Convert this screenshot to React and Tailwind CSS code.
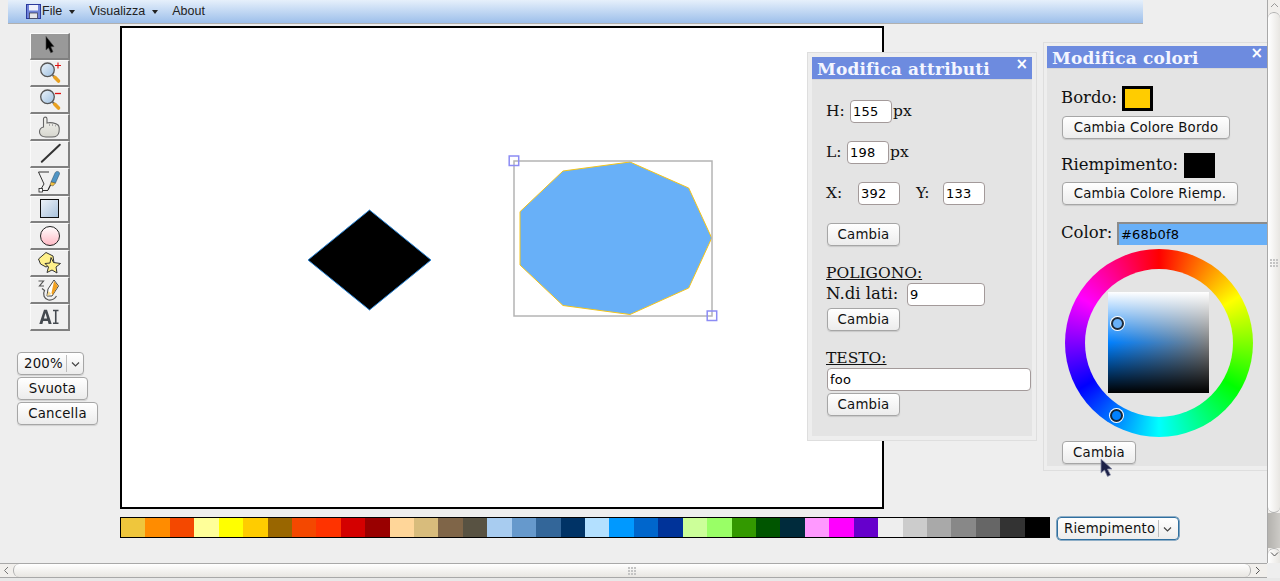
import React from 'react';

const serif = "font-['DejaVu_Serif',serif]";
const sans = "font-['DejaVu_Sans',sans-serif]";

const swatches = [
  '#efc63c', '#ff8c00', '#f44800', '#ffff99', '#ffff00', '#ffcc00', '#996600', '#f44800', '#ff3300', '#d40000',
  '#990000', '#ffd699', '#d8bc7c', '#7f6548', '#585242', '#a8ccf0', '#6699cc', '#336699', '#003366', '#b3e0ff',
  '#0099ff', '#0066cc', '#003399', '#ccff99', '#99ff66', '#339900', '#005500', '#002b3c', '#ff99ff', '#ff00ff',
  '#6600cc', '#eeeeee', '#cccccc', '#a9a9a9', '#888888', '#666666', '#333333', '#000000',
];

const Lens = ({ sign }) => (
  <svg width="24" height="24" viewBox="0 0 24 24">
    <defs>
      <linearGradient id={`lens${sign}`} x1="0" y1="0" x2="1" y2="1">
        <stop offset="0" stopColor="#eef5fb" />
        <stop offset="1" stopColor="#9dbfe0" />
      </linearGradient>
    </defs>
    <circle cx="9.5" cy="8.8" r="6.8" fill={`url(#lens${sign})`} stroke="#555" strokeWidth="1.3" />
    <path d="M14.5 14 L16.5 16" stroke="#666" strokeWidth="2" />
    <path d="M16.8 16.3 L20.5 20" stroke="#e8a020" strokeWidth="3.6" strokeLinecap="round" />
    {sign === 'plus' ? (
      <path d="M17 4.5 H23 M20 1.5 V7.5" stroke="#e01010" strokeWidth="1.1" />
    ) : (
      <path d="M17 5.5 H23" stroke="#e01010" strokeWidth="1.3" />
    )}
  </svg>
);

const toolIcons = [
  <svg key="a" width="24" height="24" viewBox="0 0 24 24">
    <path d="M8 2.5 V16 L10.5 13.8 L12.8 18.8 L15 17.8 L12.8 12.8 L16 12.5 Z" fill="#000" stroke="#444" strokeWidth="0.6" />
  </svg>,
  <Lens key="b" sign="plus" />,
  <Lens key="c" sign="minus" />,
  <svg key="d" width="24" height="24" viewBox="0 0 24 24">
    <defs>
      <linearGradient id="handFill" x1="0" y1="0" x2="0" y2="1">
        <stop offset="0" stopColor="#f6f6f2" />
        <stop offset="1" stopColor="#d6d6ce" />
      </linearGradient>
    </defs>
    <path d="M5.5 12 V4 C5.5 1.5 9 1.5 9 4 V8 C12 7 18 8 20 10 C21.5 11.5 21.5 14 21 17 C20.5 20.5 18 22 14 22 H8 C4 22 1.5 20 1.5 17 C1.5 14 3.5 12.5 5.5 12 Z" fill="url(#handFill)" stroke="#666" strokeWidth="1.1" />
    <path d="M11.5 8.5 V11 M14.5 8.5 V11 M17.5 9.5 V11.5" stroke="#aaa" strokeWidth="1" />
  </svg>,
  <svg key="e" width="24" height="24" viewBox="0 0 24 24">
    <path d="M3.8 19.8 L21.8 2.8" stroke="#333" strokeWidth="2" strokeLinecap="round" />
  </svg>,
  <svg key="f" width="24" height="24" viewBox="0 0 24 24">
    <path d="M0.5 2 H11 M0.5 2 L6 14 L3 19 M4.5 20.5 H10" fill="none" stroke="#333" strokeWidth="1" />
    <rect x="1" y="18.5" width="3.5" height="3.5" fill="#fff" stroke="#222" strokeWidth="0.8" />
    <path d="M13 12 L17 3 C18 0.5 22 1 21.5 4 L17.5 13 Z" fill="#4f94c4" stroke="#2a4a60" strokeWidth="0.5" />
    <path d="M13 12 L17.5 13 L15 16 L12 15 Z" fill="#f0c040" stroke="#333" strokeWidth="0.4" />
    <path d="M12.5 15 L10 20" stroke="#222" strokeWidth="1.1" />
  </svg>,
  <svg key="g" width="24" height="24" viewBox="0 0 24 24">
    <defs>
      <linearGradient id="rectFill" x1="0" y1="0" x2="1" y2="1">
        <stop offset="0" stopColor="#eef3f9" />
        <stop offset="1" stopColor="#a8c2dc" />
      </linearGradient>
    </defs>
    <rect x="2.5" y="2.5" width="18" height="18" fill="url(#rectFill)" stroke="#111" strokeWidth="1" />
  </svg>,
  <svg key="h" width="24" height="24" viewBox="0 0 24 24">
    <defs>
      <linearGradient id="circFill" x1="0" y1="0" x2="0" y2="1">
        <stop offset="0" stopColor="#fff" />
        <stop offset="1" stopColor="#ffb8c4" />
      </linearGradient>
    </defs>
    <circle cx="12" cy="12" r="9.5" fill="url(#circFill)" stroke="#222" strokeWidth="1" />
  </svg>,
  <svg key="i" width="24" height="24" viewBox="0 0 24 24">
    <path d="M0.5 8 L8 1.5 L15 5 L16 12 L8 16 L2.5 13 Z" fill="#fff08a" stroke="#333" strokeWidth="1" />
    <path d="M13 6.5 L15.5 11.5 L22.5 12.5 L18 16 L19 22 L14 19 L9 21.5 L10.5 16 L7 12.5 L12 12 Z" fill="#fff08a" stroke="#333" strokeWidth="1" />
  </svg>,
  <svg key="j" width="24" height="24" viewBox="0 0 24 24">
    <path d="M0.5 3 H5.5 L1.5 8 H6 M4 10.5 L6.5 12.5 C4.5 16 6 21 10.5 22 C13.5 22.5 16.5 21 18.5 18" fill="none" stroke="#555" strokeWidth="1.2" />
    <path d="M9 18 L10 11 L16 2 L20.5 8 L14 18 Z" fill="#fff" stroke="#333" strokeWidth="0.9" />
    <path d="M16 3 L20 8 L14.5 17 L13.5 15 Z" fill="#f0a020" />
    <path d="M9 18 L10.5 13 L13.5 16 Z" fill="#f8dc90" />
  </svg>,
  <svg key="k" width="24" height="24" viewBox="0 0 24 24">
    <path d="M1.3 19 L6 4.7 H9 L13.7 19 H10.6 L9.8 16 H5.2 L4.4 19 Z M5.9 13.5 H9.1 L7.5 8 Z" fill="#454a50" fillRule="evenodd" />
    <path d="M15 5.5 H20.5 M17.75 5.5 V18.2 M15 18.2 H20.5" stroke="#454a50" strokeWidth="1.6" fill="none" />
  </svg>,
];

const Btn = ({ children, className = '' }) => (
  <button className={`${sans} h-[23px] rounded-[4px] border border-[#a6a6a6] bg-gradient-to-b from-white to-[#ececec] text-[13.3px] leading-none tracking-[0.2px] text-[#111] shadow-[0_1px_1px_rgba(0,0,0,0.12)] ${className}`}>
    {children}
  </button>
);

const Caret = () => (
  <svg width="9" height="6" viewBox="0 0 9 6" className="ml-1">
    <path d="M1 1.5 L4.5 5 L8 1.5" fill="none" stroke="#444" strokeWidth="1.2" />
  </svg>
);

const SelectBox = ({ label, className = '' }) => (
  <div className={`${sans} flex h-[23px] items-center rounded-[4px] border bg-gradient-to-b from-white to-[#ececec] text-[13.3px] tracking-[0.2px] text-[#111] ${className}`}>
    <span className="pl-1.5 pr-[3px]">{label}</span>
    <span className="h-[17px] w-px bg-[#bdbdbd]" />
    <Caret />
  </div>
);

const Field = ({ value, className = '' }) => (
  <input
    readOnly
    value={value}
    className={`${sans} h-[23px] rounded-[4px] border border-[#a39a9a] bg-white px-[2px] text-[13px] tracking-[0.2px] text-black outline-none ${className}`}
  />
);

const WindowHead = ({ title }) => (
  <div className="flex h-[23px] items-center justify-between border-b border-[#d8d8d8] bg-[#6d8bdf] pl-[5px] pr-[4px]">
    <span className={`${serif} relative top-px text-[17px] font-bold leading-none tracking-[0.15px] text-[#f4f6ff]`}>{title}</span>
    <span className={`${sans} relative -top-1 text-[15px] font-bold leading-none text-white`}>×</span>
  </div>
);

const Arrow = ({ className }) => (
  <svg width="17" height="20" viewBox="0 0 17 20" className={className}>
    <path d="M1 1 V15 L4.5 12 L7.5 18.5 L10.5 17 L7.5 11 L12 11 Z" fill="#1c2148" stroke="#8b8fa8" strokeWidth="0.8" />
  </svg>
);

const Grip = () => (
  <svg width="8" height="8" viewBox="0 0 8 8">
    <path d="M0 0h2v2H0zM3 0h2v2H3zM6 0h2v2H6zM0 3h2v2H0zM3 3h2v2H3zM6 3h2v2H6zM0 6h2v2H0zM3 6h2v2H3zM6 6h2v2H6z" fill="#c4c4c4" />
  </svg>
);

function AttributesWindow() {
  return (
    <div className="absolute left-[807px] top-[52px] h-[389px] w-[230px] border border-[#dedede] bg-[#eeeeee] p-1">
      <div className={`${serif} h-[379px] w-[220px] bg-[#e4e4e4] text-[15.5px] text-[#111]`}>
        <WindowHead title="Modifica attributi" />
        <div className="pl-[14px] pt-5">
          <div className="flex h-[23px] items-center">
            <span className="w-[24px]">H:</span>
            <Field value="155" className="w-[42px]" />
            <span className="ml-[1px]">px</span>
          </div>
          <div className="mt-[18px] flex h-[23px] items-center">
            <span className="w-[21px]">L:</span>
            <Field value="198" className="w-[42px]" />
            <span className="ml-[1px]">px</span>
          </div>
          <div className="mt-[18px] flex h-[23px] items-center">
            <span className="w-[32px]">X:</span>
            <Field value="392" className="w-[42px]" />
            <span className="ml-4 w-[27px]">Y:</span>
            <Field value="133" className="w-[42px]" />
          </div>
          <Btn className="ml-[1px] mt-[18px] w-[73px]">Cambia</Btn>
          <div className="mt-[17px] h-[20px] leading-[20px] underline">POLIGONO:</div>
          <div className="flex h-[23px] items-center">
            <span className="w-[81px] text-[16.5px]">N.di lati:</span>
            <Field value="9" className="w-[78px]" />
          </div>
          <Btn className="ml-[1px] mt-[2px] w-[73px]">Cambia</Btn>
          <div className="mt-[17px] h-[20px] leading-[20px] underline">TESTO:</div>
          <Field value="foo" className="ml-[1px] block w-[204px]" />
          <Btn className="ml-[1px] mt-[2px] block w-[73px]">Cambia</Btn>
        </div>
      </div>
    </div>
  );
}

function ColorWheel() {
  return (
    <div className="relative ml-[18px] mt-[4px] h-[188px] w-[188px] rounded-full bg-[conic-gradient(#ff0000,#ffff00,#00ff00,#00ffff,#0000ff,#ff00ff,#ff0000)]">
      <div className="flex h-full w-full items-center justify-center p-5">
        <div className="flex h-full w-full items-center justify-center rounded-full bg-[#e4e4e4]">
          <div className="mb-[2px] mr-[2px] h-[101px] w-[101px] bg-[linear-gradient(to_bottom,#ffffff,rgba(255,255,255,0)_50%,rgba(0,0,0,0)_50%,#000000),linear-gradient(to_right,#0080ff,#808080)]" />
        </div>
      </div>
      {/* markers sit on top of the wheel */}
      <span className="absolute left-[46px] top-[68px] h-[13px] w-[13px] rounded-full border-2 border-[#1d2c3c] bg-[#68b0f8] shadow-[0_0_0_1px_#ffffff]" />
      <span className="absolute left-[45px] top-[160px] h-[13px] w-[13px] rounded-full border-2 border-[#10253a] bg-[#0080ff] shadow-[0_0_0_1px_#ffffff]" />
    </div>
  );
}

function ColorsWindow() {
  return (
    <div className="absolute left-[1043px] top-[42px] h-[429px] w-[240px] border border-[#dedede] bg-[#eeeeee] p-[3px]">
      <div className={`${serif} h-[420px] w-[232px] bg-[#e4e4e4] text-[16.5px] text-[#111]`}>
        <div className="w-[220px]">
          <WindowHead title="Modifica colori" />
        </div>
        <div className="pl-[14px] pt-[17px]">
          <div className="flex h-[25px] items-center">
            <span className="w-[61px]">Bordo:</span>
            <span className="h-[25px] w-[31px] border-[3px] border-black bg-[#ffcc00]" />
          </div>
          <Btn className="ml-[1px] mt-[5px] block w-[168px]">Cambia Colore Bordo</Btn>
          <div className="mt-[14px] flex h-[25px] items-center">
            <span className="w-[123px]">Riempimento:</span>
            <span className="h-[25px] w-[31px] bg-black" />
          </div>
          <Btn className="ml-[1px] mt-[4px] block w-[176px]">Cambia Colore Riemp.</Btn>
          <div className="mt-[17px] flex h-[23px] items-center">
            <span className="w-[56px]">Color:</span>
            <input
              readOnly
              value="#68b0f8"
              className={`${sans} h-[23px] w-[160px] border-l-2 border-t-2 border-[#8c8c8c] border-b-white bg-[#68b0f8] px-[2px] text-[13px] tracking-[0.2px] text-black outline-none`}
            />
          </div>
        </div>
        <ColorWheel />
        <Btn className="ml-[15px] mt-[4px] block w-[74px] from-[#f8fbfd] to-[#dfeaf2]">Cambia</Btn>
      </div>
    </div>
  );
}

function Canvas() {
  return (
    <div className="mt-[2px] h-[483px] w-[764px] border-2 border-black bg-white">
      <svg width="760" height="479" viewBox="122 28 760 479">
        <polygon points="369.5,210 431,260 369.5,310 308,260" fill="#000" stroke="#2a86d8" strokeWidth="1" />
        <polygon
          points="630,162 688.7,188 711.7,238 688.7,288 630,314.5 563,305.5 520,265 520,211.7 563,171"
          fill="#68b0f8"
          stroke="#f5c518"
          strokeWidth="1"
        />
        <rect x="514" y="161" width="198" height="155" fill="none" stroke="#b4b4b4" strokeWidth="1.5" />
        <rect x="509.2" y="156" width="9.5" height="9.5" fill="none" stroke="#8c8cf4" strokeWidth="1.5" />
        <rect x="707.2" y="311" width="9.5" height="9.5" fill="none" stroke="#8c8cf4" strokeWidth="1.5" />
      </svg>
    </div>
  );
}

function Sidebar() {
  return (
    <div className="w-[120px] shrink-0">
      <div className="ml-[30px] mt-[9px] w-[40px]">
        {toolIcons.map((icon, i) => (
          <div
            key={i}
            className={`flex h-[27.1px] items-center justify-center border-b-2 border-l border-r-2 border-t border-b-[#808080] border-l-[#fafafa] border-r-[#808080] border-t-[#fafafa] ${i === 0 ? 'bg-[#999999]' : 'bg-[#f0f0f0]'}`}
          >
            {icon}
          </div>
        ))}
      </div>
      <div className="ml-[17px] mt-[21px] flex flex-col items-start gap-[2px]">
        <SelectBox label="200%" className="w-[67px] border-[#a6a6a6] shadow-[0_1px_1px_rgba(0,0,0,0.12)]" />
        <Btn className="w-[71px]">Svuota</Btn>
        <Btn className="w-[81px]">Cancella</Btn>
      </div>
    </div>
  );
}

export default function App() {
  return (
    <div className="flex h-[581px] w-[1280px] flex-col overflow-hidden bg-[#eeeeee]">
      <div className="flex h-[563px]">
        <div className="relative w-[1267px] shrink-0 overflow-hidden">
          <div className="ml-2 flex h-[24px] w-[1135px] items-center border-b border-[#b0b0b0] bg-gradient-to-b from-[#e6f0fb] to-[#9dbfea] pl-[18px] font-['Liberation_Sans',sans-serif] text-[12.5px] text-[#222]">
            <svg width="15" height="15" viewBox="0 0 15 15">
              <rect x="0.5" y="0.5" width="14" height="14" fill="#6f82d8" stroke="#2a3a9c" />
              <rect x="3" y="1" width="9" height="5.5" fill="#eef1fb" />
              <rect x="3.5" y="9" width="8" height="5.5" fill="#e4e4ea" stroke="#334" strokeWidth="0.7" />
            </svg>
            <span className="ml-px">File</span>
            <span className="ml-[7px] h-0 w-0 border-x-[3.5px] border-t-[4px] border-x-transparent border-t-[#222]" />
            <span className="ml-[14px]">Visualizza</span>
            <span className="ml-[7px] h-0 w-0 border-x-[3.5px] border-t-[4px] border-x-transparent border-t-[#222]" />
            <span className="ml-[14px]">About</span>
          </div>
          <div className="flex">
            <Sidebar />
            <div>
              <Canvas />
              <div className="mt-[8px] flex items-start">
                <div className="flex h-[21px] w-[930px] border border-black">
                  {swatches.map((c, i) => (
                    <span key={i} className="flex-1" style={{ backgroundColor: c }} />
                  ))}
                </div>
                <SelectBox label="Riempimento" className="ml-[7px] w-[122px] border-[#2f6f9f] shadow-[0_0_0_0.6px_#2f6f9f]" />
              </div>
            </div>
          </div>
          <AttributesWindow />
          <ColorsWindow />
          <Arrow className="absolute left-[1100px] top-[458px]" />
        </div>
        <div className="flex w-[13px] shrink-0 flex-col border-l border-[#a8a8a8] bg-[#f1efec]">
          <div className="h-[12px] text-center">
            <svg width="11" height="11" viewBox="0 0 11 11" className="inline-block align-top">
              <path d="M2 7 L5.5 3.5 L9 7" fill="none" stroke="#999" strokeWidth="1" />
            </svg>
          </div>
          <div className="flex h-[501px] w-full items-center justify-center rounded-[6px] border-y border-[#b0b0b0] bg-gradient-to-r from-white to-[#e8e6e2]">
            <Grip />
          </div>
          <div className="h-[35px] bg-gradient-to-r from-[#b4b2ae] to-[#cccac6]" />
          <div className="h-[15px] rounded-t-[6px] border-t border-[#b0b0b0] bg-gradient-to-r from-white to-[#e8e6e2] text-center">
            <svg width="11" height="11" viewBox="0 0 11 11" className="inline-block align-top">
              <path d="M2 3.5 L5.5 7 L9 3.5" fill="none" stroke="#555" strokeWidth="1" />
            </svg>
          </div>
        </div>
      </div>
      <div className="flex h-[15px] items-center">
        <div className="flex h-full w-[1267px] items-center border-y border-[#a8a8a8] bg-[#f1efec]">
          <svg width="13" height="13" viewBox="0 0 13 13" className="shrink-0">
            <path d="M8 3 L4.5 6.5 L8 10" fill="none" stroke="#777" strokeWidth="1" />
          </svg>
          <div className="flex h-full w-[1238px] items-center justify-center rounded-[6px] border-x border-[#b0b0b0] bg-gradient-to-b from-white to-[#e8e6e2]">
            <Grip />
          </div>
          <svg width="13" height="13" viewBox="0 0 13 13" className="shrink-0">
            <path d="M5 3 L8.5 6.5 L5 10" fill="none" stroke="#555" strokeWidth="1" />
          </svg>
        </div>
      </div>
      <div className="flex-1 bg-[#e8e8e8]" />
    </div>
  );
}
